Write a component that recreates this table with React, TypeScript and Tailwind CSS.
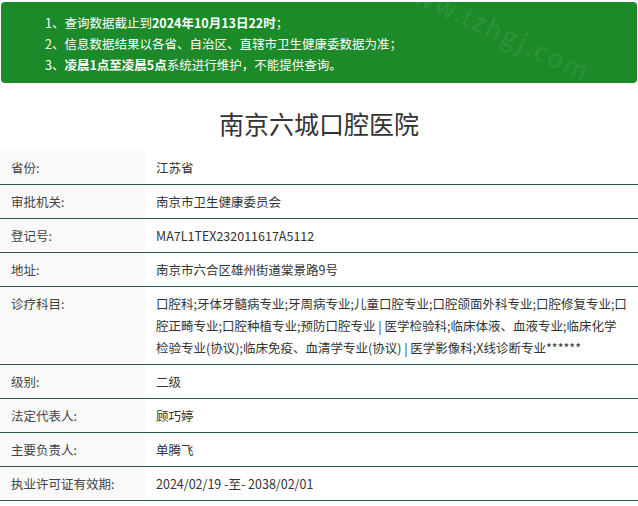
import React from "react";

const rows: { label: string; value: string }[] = [
  { label: "省份:", value: "江苏省" },
  { label: "审批机关:", value: "南京市卫生健康委员会" },
  { label: "登记号:", value: "MA7L1TEX232011617A5112" },
  { label: "地址:", value: "南京市六合区雄州街道棠景路9号" },
  {
    label: "诊疗科目:",
    value:
      "口腔科;牙体牙髓病专业;牙周病专业;儿童口腔专业;口腔颌面外科专业;口腔修复专业;口腔正畸专业;口腔种植专业;预防口腔专业 | 医学检验科;临床体液、血液专业;临床化学检验专业(协议);临床免疫、血清学专业(协议) | 医学影像科;X线诊断专业******",
  },
  { label: "级别:", value: "二级" },
  { label: "法定代表人:", value: "顾巧婷" },
  { label: "主要负责人:", value: "单腾飞" },
  { label: "执业许可证有效期:", value: "2024/02/19 -至- 2038/02/01" },
];

export default function App() {
  return (
    <div
      className="w-[638px] h-[506px] overflow-hidden bg-white text-[12.5px] text-[#333]"
      style={{ fontFamily: '"Noto Sans CJK SC", "Noto Sans", sans-serif' }}
    >
      <div className="pt-[2px] pl-[1px] pr-[1px]">
        <div className="relative overflow-hidden rounded-[4px] bg-[#1c8a29] pl-[44px] pt-[10px] pb-[8px] text-white leading-[21px]">
          <div className="relative z-10">
            1、查询数据截止到<b>2024年10月13日22时</b>；
          </div>
          <div className="relative z-10">2、信息数据结果以各省、自治区、直辖市卫生健康委数据为准；</div>
          <div className="relative z-10">
            3、<b>凌晨1点至凌晨5点</b>系统进行维护，不能提供查询。
          </div>
          <div className="pointer-events-none absolute left-[385px] top-[14px] rotate-[25deg] text-[26px] tracking-[2px] text-white/[0.07]">
            www.tzhgj.com
          </div>
        </div>
      </div>
      <div className="flex h-[68px] justify-center pt-[23px] text-[25px] leading-[34px] text-[#333]">
        南京六城口腔医院
      </div>
      <div>
        {rows.map((r, i) => (
          <div
            key={i}
            className={`flex ${i === 0 ? "" : "border-t border-[#2c5b43]"}`}
          >
            <div className="w-[145px] shrink-0 bg-[#f9f9f9] pl-[11px] pt-[6px] pb-[5px] leading-[22px] text-[#444]">
              {r.label}
            </div>
            <div className="flex-1 pl-[11px] pr-[11px] pt-[6px] pb-[5px] leading-[22px] text-[#333] break-all">
              {r.value}
            </div>
          </div>
        ))}
        <div className="border-t border-[#2c5b43]" />
      </div>
    </div>
  );
}
